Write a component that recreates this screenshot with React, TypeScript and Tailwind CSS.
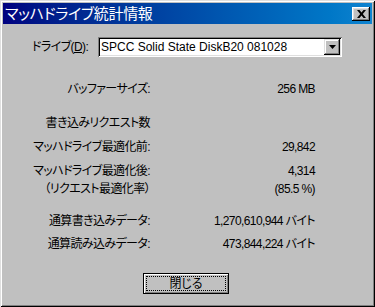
const jp = "font-['Liberation_Sans','Noto_Sans_CJK_JP',sans-serif] [font-feature-settings:'palt']"

const rows: { label: string; value: string; mt: string }[] = [
  { label: 'バッファーサイズ:', value: '256 MB', mt: 'mt-[24px]' },
  { label: '書き込みリクエスト数', value: '', mt: 'mt-[18px]' },
  { label: 'マッハドライブ最適化前:', value: '29,842', mt: 'mt-[8px]' },
  { label: 'マッハドライブ最適化後:', value: '4,314', mt: 'mt-[8px]' },
  { label: '（リクエスト最適化率）', value: '(85.5 %)', mt: 'mt-[2px]' },
  { label: '通算書き込みデータ:', value: '1,270,610,944 バイト', mt: 'mt-[16px]' },
  { label: '通算読み込みデータ:', value: '473,844,224 バイト', mt: 'mt-[7px]' },
]

function CloseButton() {
  return (
    <div className="mr-[2px] flex h-[14px] w-[18px] items-center justify-center bg-[#c0c0c0] shadow-[inset_-1px_-1px_#000,inset_1px_1px_#fff,inset_-2px_-2px_#808080,inset_2px_2px_#dfdfdf]">
      <svg width="9" height="8" viewBox="0 0 9 8">
        <path d="M0 0h2.5L4.5 2.5 6.5 0H9L5.8 4 9 8H6.5L4.5 5.5 2.5 8H0l3.2-4z" fill="#000" />
      </svg>
    </div>
  )
}

function Combo() {
  return (
    <div className="flex h-[20px] w-[244px] items-center bg-white shadow-[inset_1px_1px_#808080,inset_-1px_-1px_#fff,inset_2px_2px_#000,inset_-2px_-2px_#dfdfdf]">
      <span className="flex-1 pl-[3px] text-[12px] leading-[16px] text-black font-['Liberation_Sans',sans-serif]">
        SPCC Solid State DiskB20 081028
      </span>
      <div className="mr-[2px] flex h-[16px] w-[16px] items-center justify-center bg-[#c0c0c0] shadow-[inset_-1px_-1px_#000,inset_1px_1px_#dfdfdf,inset_-2px_-2px_#808080,inset_2px_2px_#fff]">
        <svg width="7" height="4" viewBox="0 0 7 4">
          <path d="M0 0h7L3.5 4z" fill="#000" />
        </svg>
      </div>
    </div>
  )
}

export default function App() {
  return (
    <div className={`flex h-[307px] w-[375px] flex-col bg-[#c0c0c0] text-black shadow-[inset_1px_1px_#dfdfdf,inset_-1px_-1px_#000,inset_2px_2px_#fff,inset_-2px_-2px_#808080] ${jp}`}>
      <div className="mx-[3px] mt-[3px] flex h-[21px] items-center justify-between bg-gradient-to-r from-[#000080] to-[#1084d0]">
        <span className="pl-[2px] text-[15px] leading-[18px] tracking-[-0.3px] text-white">マッハドライブ統計情報</span>
        <CloseButton />
      </div>

      <div className="mt-[13px] flex items-center">
        <span className="ml-[32px] w-[66px] text-[12px] leading-[16px] tracking-[-0.6px]">
          ドライブ(<span className="underline">D</span>):
        </span>
        <Combo />
      </div>

      {rows.map(r => (
        <div key={r.label} className={`flex h-[16px] text-[12px] leading-[16px] tracking-[-0.6px] ${r.mt}`}>
          <span className="w-[150px] text-right">{r.label}</span>
          <span className="w-[165px] text-right">{r.value}</span>
        </div>
      ))}

      <div className="ml-[143px] mt-[21px] h-[21px] w-[86px] border border-black bg-[#c0c0c0] p-[2px] shadow-[inset_1px_1px_#fff,inset_-1px_-1px_#808080]">
        <div className="flex h-full items-center justify-center border border-dotted border-black text-[12px] leading-[14px]">
          閉じる
        </div>
      </div>
    </div>
  )
}
